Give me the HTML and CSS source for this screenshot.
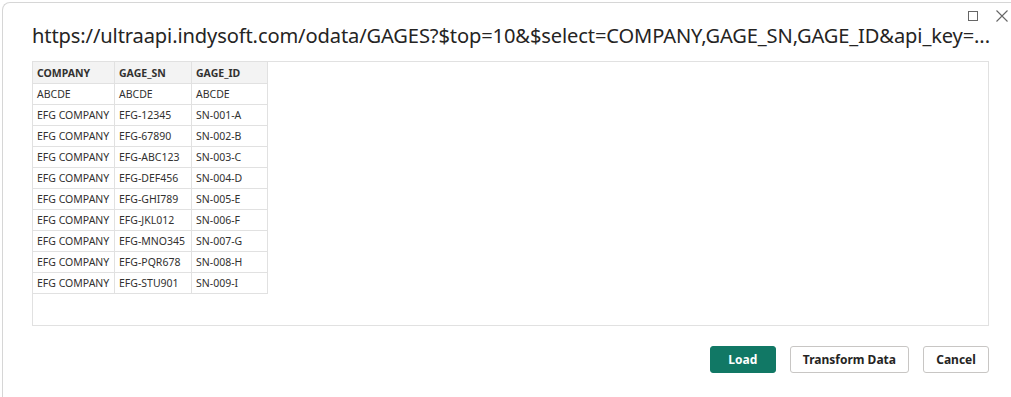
FILE: index.html
```html
<!DOCTYPE html>
<html>
<head>
<meta charset="utf-8">
<link rel="stylesheet" href="styles.css">
</head>
<body>
<div class="dialog">
  <div class="controls">
    <svg class="ctl" width="12" height="12" viewBox="0 0 12 12"><rect x="1.5" y="1.5" width="9" height="9" fill="none" stroke="#666" stroke-width="1"/></svg>
    <svg class="ctl" width="14" height="14" viewBox="0 0 14 14"><path d="M1.5 1.5 L12.5 12.5 M12.5 1.5 L1.5 12.5" stroke="#666" stroke-width="1.1"/></svg>
  </div>
  <h1 class="title">https://ultraapi.indysoft.com/odata/GAGES?$top=10&amp;$select=COMPANY,GAGE_SN,GAGE_ID&amp;api_key=...</h1>
  <div class="preview">
    <table class="grid">
      <colgroup><col class="c1"><col class="c2"><col class="c3"></colgroup>
      <thead>
        <tr><th>COMPANY</th><th>GAGE_SN</th><th>GAGE_ID</th></tr>
      </thead>
      <tbody>
        <tr><td>ABCDE</td><td>ABCDE</td><td>ABCDE</td></tr>
        <tr><td>EFG COMPANY</td><td>EFG-12345</td><td>SN-001-A</td></tr>
        <tr><td>EFG COMPANY</td><td>EFG-67890</td><td>SN-002-B</td></tr>
        <tr><td>EFG COMPANY</td><td>EFG-ABC123</td><td>SN-003-C</td></tr>
        <tr><td>EFG COMPANY</td><td>EFG-DEF456</td><td>SN-004-D</td></tr>
        <tr><td>EFG COMPANY</td><td>EFG-GHI789</td><td>SN-005-E</td></tr>
        <tr><td>EFG COMPANY</td><td>EFG-JKL012</td><td>SN-006-F</td></tr>
        <tr><td>EFG COMPANY</td><td>EFG-MNO345</td><td>SN-007-G</td></tr>
        <tr><td>EFG COMPANY</td><td>EFG-PQR678</td><td>SN-008-H</td></tr>
        <tr><td>EFG COMPANY</td><td>EFG-STU901</td><td>SN-009-I</td></tr>
      </tbody>
    </table>
  </div>
  <div class="actions">
    <button class="btn primary">Load</button>
    <button class="btn">Transform Data</button>
    <button class="btn">Cancel</button>
  </div>
</div>
</body>
</html>
```

FILE: styles.css
```css
html, body {
  margin: 0;
  padding: 0;
  background: #ffffff;
}
body {
  font-family: "Noto Sans", "Open Sans", sans-serif;
  color: #252423;
  overflow: hidden;
  width: 1011px;
  height: 397px;
}
.dialog {
  position: relative;
  margin: 2px 0 0 2px;
  height: 395px;
  border: 1px solid #d6d6d6;
  border-right: none;
  border-bottom: none;
  border-radius: 8px 0 0 0;
  box-sizing: border-box;
  padding: 0 22px 0 29px;
  background: #fff;
}
.controls {
  position: absolute;
  top: 6px;
  right: 2px;
  display: flex;
  align-items: center;
  gap: 16px;
}
.ctl { display: block; }
.title {
  margin: 0;
  padding-top: 20px;
  height: 38px;
  box-sizing: content-box;
  font-size: 20.1px;
  font-weight: 400;
  line-height: 26px;
  letter-spacing: -0.12px;
  white-space: nowrap;
  color: #252423;
}
.preview {
  height: 265px;
  border: 1px solid #e1e1e1;
  box-sizing: border-box;
}
.grid {
  border-collapse: collapse;
  table-layout: fixed;
  width: 235px;
  margin: -1px 0 0 -1px;
  font-size: 10.5px;
  color: #323130;
}
.grid th, .grid td {
  border: 1px solid #e1e1e1;
  height: 21px;
  padding: 0 4px;
  text-align: left;
  white-space: nowrap;
  overflow: hidden;
  box-sizing: border-box;
}
.grid th {
  background: #f3f3f3;
  font-weight: 700;
  height: 22px;
}
.grid .c1 { width: 82px; }
.grid .c2 { width: 77px; }
.grid .c3 { width: 76px; }
.actions {
  display: flex;
  justify-content: flex-end;
  gap: 14px;
  margin-top: 20px;
}
.btn {
  font-family: "Noto Sans", "Open Sans", sans-serif;
  font-size: 12px;
  font-weight: 700;
  height: 27px;
  padding: 0 12px;
  min-width: 66px;
  border: 1px solid #c8c6c4;
  border-radius: 3px;
  background: #fff;
  color: #252423;
  box-sizing: border-box;
}
.btn.primary {
  background: #117865;
  border-color: #117865;
  color: #fff;
}
```
